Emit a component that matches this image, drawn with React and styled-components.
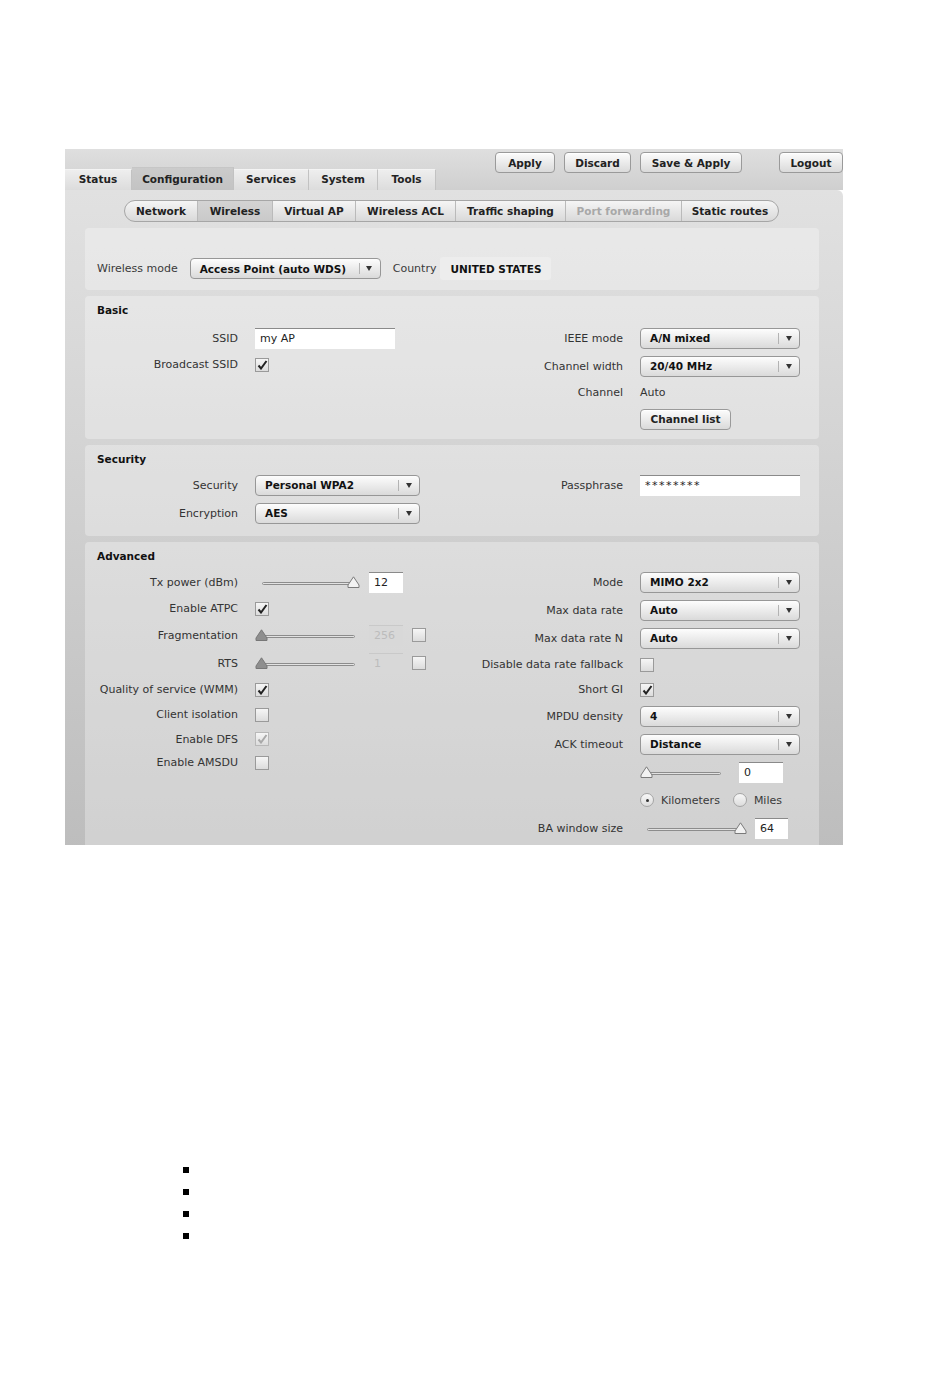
import React from "react";
import styled, { createGlobalStyle } from "styled-components";

const FONT = `"DejaVu Sans", Verdana, sans-serif`;

const GlobalStyle = createGlobalStyle`
  * { box-sizing: border-box; }
  body {
    margin: 0;
    background: #fff;
    font-family: ${FONT};
    font-size: 11px;
    color: #333;
  }
`;

const Page = styled.div`
  padding: 149px 0 120px 65px;
`;

const Frame = styled.div`
  width: 778px;
  height: 696px;
  overflow: hidden;
  display: flex;
  flex-direction: column;
`;

const Header = styled.div`
  height: 41px;
  flex-shrink: 0;
  display: flex;
  justify-content: space-between;
  background: linear-gradient(#dfdfdf, #cfcfcf);
`;

const Tabs = styled.div`
  display: flex;
  align-items: flex-end;
`;

const Tab = styled.div`
  width: ${(p) => p.$w}px;
  height: ${(p) => (p.$active ? 23 : 21)}px;
  padding-bottom: ${(p) => (p.$active ? 0 : 2)}px;
  display: flex;
  align-items: center;
  justify-content: center;
  font-size: 10.5px;
  font-weight: bold;
  color: #222;
  background: ${(p) =>
    p.$active
      ? "linear-gradient(#cbcbcb, #c3c3c3)"
      : "linear-gradient(#eeeeee, #dcdcdc)"};
  border-top: 1px solid ${(p) => (p.$active ? "#c6c6c6" : "#f4f4f4")};
  border-right: 1px solid #c2c2c2;
`;

const Actions = styled.div`
  display: flex;
  align-items: flex-start;
  gap: 9px;
  padding-top: 3px;
`;

const Button = styled.button`
  width: ${(p) => p.$w}px;
  height: 21px;
  margin-left: ${(p) => p.$ml || 0}px;
  padding: 0;
  border: 1px solid #9a9a9a;
  border-radius: 4px;
  background: linear-gradient(#fcfcfc, #dadada);
  box-shadow: inset 0 1px 0 #fff;
  font: bold 10.5px ${FONT};
  color: #222;
`;

const Panel = styled.div`
  flex: 1;
  display: flex;
  flex-direction: column;
  gap: 6px;
  padding: 10px 24px 0 20px;
  border-top-right-radius: 6px;
  background: linear-gradient(#e1e1e1 0%, #d5d5d5 35%, #bdbdbd 100%);
`;

const SubTabs = styled.div`
  flex-shrink: 0;
  align-self: flex-start;
  display: flex;
  height: 22px;
  margin-left: 39px;
  border: 1px solid #a6a6a6;
  border-radius: 11px;
  overflow: hidden;
  background: linear-gradient(#f5f5f5, #d9d9d9);
`;

const SubTab = styled.div`
  width: ${(p) => p.$w}px;
  display: flex;
  align-items: center;
  justify-content: center;
  font-size: 10.5px;
  font-weight: bold;
  color: ${(p) => (p.$disabled ? "#a8a8a8" : "#222")};
  background: ${(p) =>
    p.$active ? "linear-gradient(#d3d3d3, #c9c9c9)" : "transparent"};
  & + & {
    border-left: 1px solid #bababa;
  }
`;

const Section = styled.div`
  flex-shrink: 0;
  border-radius: 4px;
  background: rgba(255, 255, 255, 0.3);
  padding-bottom: ${(p) => p.$pb || 0}px;
`;

const TopSection = styled(Section)`
  height: 62px;
  display: flex;
  align-items: center;
  padding: 19px 12px 0;
`;

const Title = styled.div`
  padding: 7px 12px ${(p) => (p.$tight ? 5 : 7)}px;
  line-height: 14px;
  font-size: 10.5px;
  font-weight: bold;
  color: #111;
`;

const Body = styled.div`
  display: grid;
  grid-template-columns: 370px 1fr;
  align-items: start;
`;

const Col = styled.div`
  display: flex;
  flex-direction: column;
`;

const Row = styled.div`
  display: flex;
  align-items: center;
  height: ${(p) => p.$h || 28}px;
`;

const Label = styled.div`
  flex-shrink: 0;
  width: ${(p) => p.$w}px;
  padding-right: 17px;
  text-align: right;
  white-space: nowrap;
  color: #333;
`;

const InlineLabel = styled.span`
  margin: 0 ${(p) => p.$mr || 0}px 0 ${(p) => p.$ml || 0}px;
  white-space: nowrap;
  color: #3a3a3a;
`;

const SelectBox = styled.div`
  width: ${(p) => p.$w}px;
  height: 21px;
  display: flex;
  align-items: center;
  padding-left: 9px;
  border: 1px solid #979797;
  border-radius: 4px;
  background: linear-gradient(#fdfdfd, #dadada);
  font-size: 10.5px;
  font-weight: bold;
  color: #111;
  white-space: nowrap;
`;

const Arrow = styled.span`
  position: relative;
  margin-left: auto;
  width: 21px;
  height: 100%;
  display: flex;
  align-items: center;
  justify-content: center;
  &::before {
    content: "";
    position: absolute;
    left: 0;
    top: 4px;
    bottom: 4px;
    width: 1px;
    background: #b3b3b3;
  }
  &::after {
    content: "";
    border-left: 3.5px solid transparent;
    border-right: 3.5px solid transparent;
    border-top: 5px solid #333;
  }
`;

const Country = styled.div`
  height: 23px;
  display: flex;
  align-items: center;
  padding: 0 10px;
  border-radius: 3px;
  background: #ededed;
  font-size: 10.5px;
  font-weight: bold;
  color: #111;
`;

const Field = styled.input`
  width: ${(p) => p.$w}px;
  height: 21px;
  margin-left: ${(p) => p.$ml || 0}px;
  padding: 0 5px;
  border: none;
  border-top: 1px solid ${(p) => (p.disabled ? "#c9c9c9" : "#8a8a8a")};
  background: ${(p) => (p.disabled ? "#d8d8d8" : "#fff")};
  font: 11px ${FONT};
  letter-spacing: ${(p) => p.$ls || 0}px;
  color: ${(p) => (p.disabled ? "#bcbcbc" : "#222")};
  outline: none;
`;

const Box = styled.span`
  flex-shrink: 0;
  width: 14px;
  height: 14px;
  margin-left: ${(p) => p.$ml || 0}px;
  display: inline-flex;
  align-items: center;
  justify-content: center;
  border: 1px solid ${(p) => (p.$disabled ? "#b8b8b8" : "#9a9a9a")};
  background: linear-gradient(#f6f6f6, #dcdcdc);
`;

const RadioDot = styled.span`
  flex-shrink: 0;
  width: 14px;
  height: 14px;
  margin-left: ${(p) => p.$ml || 0}px;
  border-radius: 50%;
  border: 1px solid #a5a5a5;
  background: linear-gradient(#f8f8f8, #dcdcdc);
  display: inline-flex;
  align-items: center;
  justify-content: center;
  &::after {
    content: "";
    width: 3px;
    height: 3px;
    border-radius: 50%;
    background: ${(p) => (p.$on ? "#333" : "transparent")};
  }
`;

const Track = styled.div`
  position: relative;
  flex-shrink: 0;
  width: ${(p) => p.$w}px;
  height: 14px;
  margin-right: ${(p) => p.$mr || 0}px;
`;

const Rail = styled.div`
  position: absolute;
  left: ${(p) => p.$inset}px;
  right: 5px;
  top: 7px;
  height: 3px;
  border: 1px solid #8c8c8c;
  border-radius: 2px;
  background: #e2e2e2;
`;

const Thumb = styled.svg`
  position: absolute;
  top: 1px;
  ${(p) => (p.$end ? "right: 0;" : "left: 0;")}
`;

const Bullets = styled.ul`
  list-style: none;
  margin: 314px 0 0 118px;
  padding: 0;
`;

const Bullet = styled.li`
  height: 22px;
  display: flex;
  align-items: center;
  &::before {
    content: "";
    width: 6px;
    height: 6px;
    background: #000;
  }
`;

const Select = ({ w, children }) => (
  <SelectBox $w={w}>
    {children}
    <Arrow />
  </SelectBox>
);

const Check = ({ on, disabled, ml }) => (
  <Box $disabled={disabled} $ml={ml}>
    {on && (
      <svg width="11" height="10" viewBox="0 0 11 10">
        <path
          d="M1.5 5.5 L4 8.5 L9.5 1"
          fill="none"
          stroke={disabled ? "#a9a9a9" : "#222"}
          strokeWidth="2"
        />
      </svg>
    )}
  </Box>
);

const Slider = ({ w, end, disabled, mr, inset = 7 }) => (
  <Track $w={w} $mr={mr}>
    <Rail $inset={inset} />
    <Thumb $end={end} width="13" height="12" viewBox="0 0 13 12">
      <path
        d="M1 11.5 L1 9 L6.5 0.8 L12 9 L12 11.5 Z"
        fill={disabled ? "#8e8e8e" : "#f2f2f2"}
        stroke={disabled ? "#777" : "#7a7a7a"}
        strokeWidth="1"
      />
    </Thumb>
  </Track>
);

const L = 170;
const R = 185;

export default function App() {
  return (
    <>
      <GlobalStyle />
      <Page>
        <Frame>
          <Header>
            <Tabs>
              <Tab $w={67}>Status</Tab>
              <Tab $w={102} $active>
                Configuration
              </Tab>
              <Tab $w={75}>Services</Tab>
              <Tab $w={69}>System</Tab>
              <Tab $w={58}>Tools</Tab>
            </Tabs>
            <Actions>
              <Button $w={60}>Apply</Button>
              <Button $w={67}>Discard</Button>
              <Button $w={102}>Save &amp; Apply</Button>
              <Button $w={64} $ml={28}>
                Logout
              </Button>
            </Actions>
          </Header>

          <Panel>
            <SubTabs>
              <SubTab $w={72}>Network</SubTab>
              <SubTab $w={75} $active>
                Wireless
              </SubTab>
              <SubTab $w={83}>Virtual AP</SubTab>
              <SubTab $w={100}>Wireless ACL</SubTab>
              <SubTab $w={110}>Traffic shaping</SubTab>
              <SubTab $w={116} $disabled>
                Port forwarding
              </SubTab>
              <SubTab $w={97}>Static routes</SubTab>
            </SubTabs>

            <TopSection>
              <InlineLabel $mr={12}>Wireless mode</InlineLabel>
              <Select w={191}>Access Point (auto WDS)</Select>
              <InlineLabel $ml={12} $mr={4}>
                Country
              </InlineLabel>
              <Country>UNITED STATES</Country>
            </TopSection>

            <Section $pb={6}>
              <Title>Basic</Title>
              <Body>
                <Col>
                  <Row>
                    <Label $w={L}>SSID</Label>
                    <Field $w={140} readOnly value="my AP" />
                  </Row>
                  <Row $h={25}>
                    <Label $w={L}>Broadcast SSID</Label>
                    <Check on />
                  </Row>
                </Col>
                <Col>
                  <Row>
                    <Label $w={R}>IEEE mode</Label>
                    <Select w={160}>A/N mixed</Select>
                  </Row>
                  <Row>
                    <Label $w={R}>Channel width</Label>
                    <Select w={160}>20/40 MHz</Select>
                  </Row>
                  <Row $h={25}>
                    <Label $w={R}>Channel</Label>
                    <span>Auto</span>
                  </Row>
                  <Row>
                    <Label $w={R} />
                    <Button $w={91}>Channel list</Button>
                  </Row>
                </Col>
              </Body>
            </Section>

            <Section $pb={9}>
              <Title $tight>Security</Title>
              <Body>
                <Col>
                  <Row>
                    <Label $w={L}>Security</Label>
                    <Select w={165}>Personal WPA2</Select>
                  </Row>
                  <Row>
                    <Label $w={L}>Encryption</Label>
                    <Select w={165}>AES</Select>
                  </Row>
                </Col>
                <Col>
                  <Row>
                    <Label $w={R}>Passphrase</Label>
                    <Field $w={160} $ls={1.5} readOnly value="********" />
                  </Row>
                </Col>
              </Body>
            </Section>

            <Section $pb={8}>
              <Title $tight>Advanced</Title>
              <Body>
                <Col>
                  <Row>
                    <Label $w={L}>Tx power (dBm)</Label>
                    <Slider w={105} end mr={9} />
                    <Field $w={34} readOnly value="12" />
                  </Row>
                  <Row $h={25}>
                    <Label $w={L}>Enable ATPC</Label>
                    <Check on />
                  </Row>
                  <Row>
                    <Label $w={L}>Fragmentation</Label>
                    <Slider w={105} disabled mr={9} inset={4} />
                    <Field $w={34} disabled value="256" />
                    <Check ml={9} />
                  </Row>
                  <Row>
                    <Label $w={L}>RTS</Label>
                    <Slider w={105} disabled mr={9} inset={4} />
                    <Field $w={34} disabled value="1" />
                    <Check ml={9} />
                  </Row>
                  <Row $h={25}>
                    <Label $w={L}>Quality of service (WMM)</Label>
                    <Check on />
                  </Row>
                  <Row $h={25}>
                    <Label $w={L}>Client isolation</Label>
                    <Check />
                  </Row>
                  <Row $h={24}>
                    <Label $w={L}>Enable DFS</Label>
                    <Check on disabled />
                  </Row>
                  <Row $h={23}>
                    <Label $w={L}>Enable AMSDU</Label>
                    <Check />
                  </Row>
                </Col>
                <Col>
                  <Row>
                    <Label $w={R}>Mode</Label>
                    <Select w={160}>MIMO 2x2</Select>
                  </Row>
                  <Row>
                    <Label $w={R}>Max data rate</Label>
                    <Select w={160}>Auto</Select>
                  </Row>
                  <Row>
                    <Label $w={R}>Max data rate N</Label>
                    <Select w={160}>Auto</Select>
                  </Row>
                  <Row $h={25}>
                    <Label $w={R}>Disable data rate fallback</Label>
                    <Check />
                  </Row>
                  <Row $h={25}>
                    <Label $w={R}>Short GI</Label>
                    <Check on />
                  </Row>
                  <Row>
                    <Label $w={R}>MPDU density</Label>
                    <Select w={160}>4</Select>
                  </Row>
                  <Row>
                    <Label $w={R}>ACK timeout</Label>
                    <Select w={160}>Distance</Select>
                  </Row>
                  <Row>
                    <Label $w={R} />
                    <Slider w={86} mr={13} inset={5} />
                    <Field $w={44} readOnly value="0" />
                  </Row>
                  <Row>
                    <Label $w={R} />
                    <RadioDot $on />
                    <InlineLabel $ml={7}>Kilometers</InlineLabel>
                    <RadioDot $ml={13} />
                    <InlineLabel $ml={7}>Miles</InlineLabel>
                  </Row>
                  <Row>
                    <Label $w={R}>BA window size</Label>
                    <Slider w={107} end mr={8} />
                    <Field $w={33} readOnly value="64" />
                  </Row>
                </Col>
              </Body>
            </Section>
          </Panel>
        </Frame>

        <Bullets>
          <Bullet />
          <Bullet />
          <Bullet />
          <Bullet />
        </Bullets>
      </Page>
    </>
  );
}
